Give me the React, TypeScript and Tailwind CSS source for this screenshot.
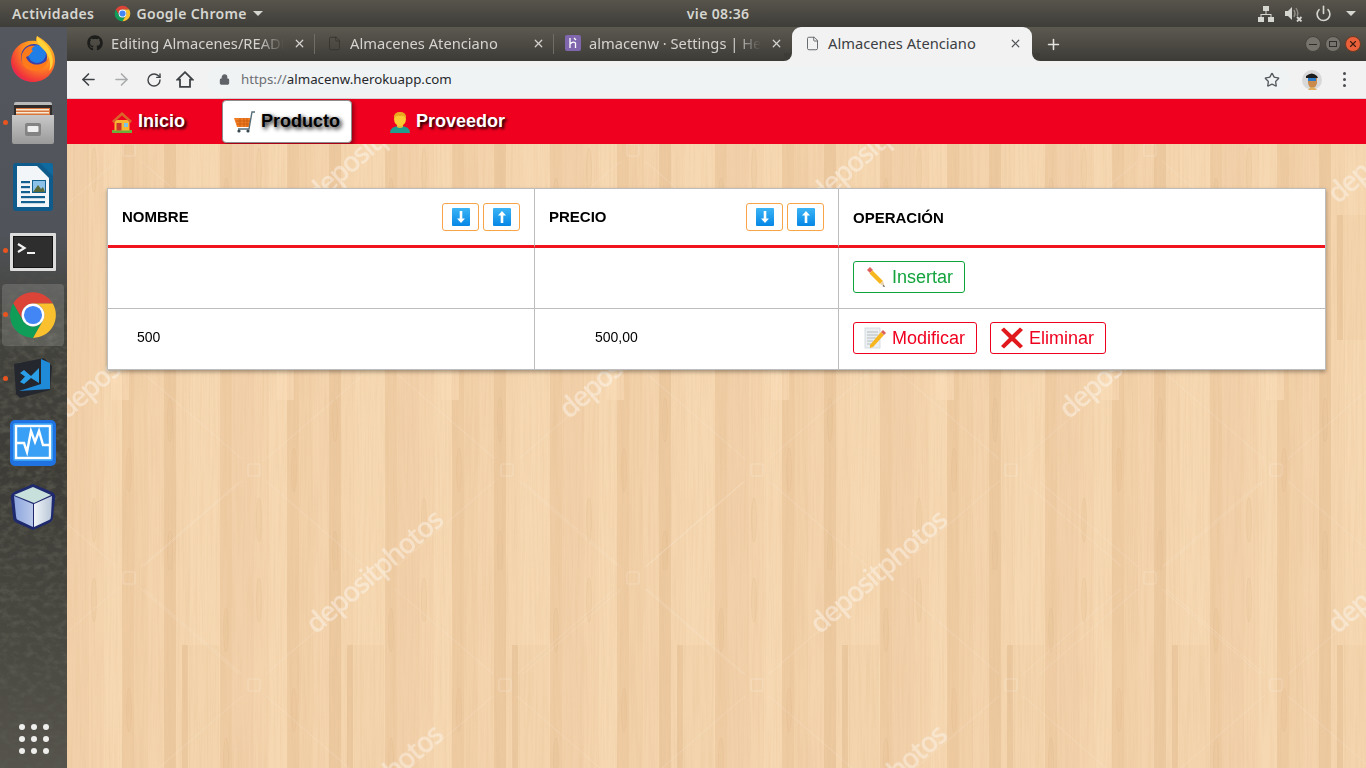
import React from "react";
import { FaGithub } from "react-icons/fa";
import { ArrowLeft, ArrowRight, RotateCw, Star, Lock, X, Plus, Power, File } from "lucide-react";

const sans = "font-['Liberation_Sans',Arial,sans-serif]";
const ui = "font-['Noto_Sans','Open_Sans',sans-serif]";

function ChromeLogo({ size }: { size: number }) {
  return (
    <svg width={size} height={size} viewBox="0 0 48 48">
      <path d="M43 13H24A11 11 0 0 0 14.5 29.5L5 13A22 22 0 0 1 43 13Z" fill="#db4437" />
      <path d="M5 13L14.5 29.5A11 11 0 0 0 33.5 29.5L24 46A22 22 0 0 1 5 13Z" fill="#0f9d58" />
      <path d="M24 46L33.5 29.5A11 11 0 0 0 24 13H43A22 22 0 0 1 24 46Z" fill="#fbc02d" />
      <circle cx="24" cy="24" r="11" fill="#fff" />
      <circle cx="24" cy="24" r="8.7" fill="#4285f4" />
    </svg>
  );
}

function Firefox() {
  return (
    <svg width="46" height="48" viewBox="0 0 46 48">
      <defs>
        <radialGradient id="ffo" cx="0.7" cy="0.25" r="0.95">
          <stop offset="0" stopColor="#ffcb2e" />
          <stop offset="0.45" stopColor="#ff8a1f" />
          <stop offset="0.8" stopColor="#f0323c" />
          <stop offset="1" stopColor="#d6178a" />
        </radialGradient>
      </defs>
      <path d="M27 1C24 8 30 10 26 6C14 4 2 12 1 26C1 38 11 47 23 47C35 47 45 38 45 25C45 14 36 6 27 1Z" fill="url(#ffo)" />
      <circle cx="24" cy="22" r="13" fill="#3c3fa8" />
      <circle cx="27" cy="19" r="9" fill="#1f7fe6" />
      <path d="M12 19C15 12 20 10 25 11C21 13 21 15 23 16C20 18 20 21 16 22C18 28 25 32 33 28C37 26 38 24 39 22C38 32 29 38 20 35C13 33 10 26 12 19Z" fill="#ff7a1a" />
      <path d="M27 1C32 6 40 12 42 21C44 28 42 33 39 36C42 28 39 20 34 15C30 11 26 8 27 1Z" fill="#ffd23a" />
    </svg>
  );
}

function Cabinet() {
  return (
    <svg width="44" height="44" viewBox="0 0 44 44">
      <defs>
        <linearGradient id="cabFront" x1="0" y1="0" x2="0" y2="1">
          <stop offset="0" stopColor="#c8c8c8" />
          <stop offset="1" stopColor="#9a9a9a" />
        </linearGradient>
      </defs>
      <path d="M3 3Q3 1 5 1H39Q41 1 41 3V10H3Z" fill="#b9b9b9" />
      <rect x="3" y="4" width="38" height="10" fill="#2e2b28" />
      <rect x="5" y="7" width="34" height="8" fill="#d9743a" />
      <rect x="5" y="8" width="33" height="1.5" fill="#f8e9d2" />
      <rect x="5" y="11" width="33" height="1.5" fill="#f8e9d2" />
      <path d="M1 14H43V41Q43 43 41 43H3Q1 43 1 41Z" fill="url(#cabFront)" />
      <rect x="14" y="22" width="16" height="13" rx="2" fill="#838383" />
      <rect x="16.5" y="25" width="11" height="6" rx="1" fill="#efefef" />
    </svg>
  );
}

function Writer() {
  return (
    <svg width="40" height="48" viewBox="0 0 40 48">
      <rect x="0" y="0" width="40" height="48" rx="3" fill="#0f5c8c" />
      <path d="M4 3H24L36 15V44H4Z" fill="#f3f6f8" />
      <path d="M27 0H37A3 3 0 0 1 40 3V13Z" fill="#0f6aa0" />
      <rect x="8" y="18" width="9" height="2.2" fill="#14608f" />
      <rect x="8" y="23" width="9" height="2.2" fill="#14608f" />
      <rect x="8" y="28" width="9" height="2.2" fill="#14608f" />
      <rect x="8" y="33" width="24" height="2.2" fill="#14608f" />
      <rect x="8" y="38" width="24" height="2.2" fill="#14608f" />
      <rect x="19" y="17" width="14" height="13" fill="#14608f" />
      <rect x="20" y="18" width="12" height="11" fill="#8cc2e8" />
      <path d="M20 29L25 22L28 26L30 24L32 29Z" fill="#5a6a3a" />
    </svg>
  );
}

function Terminal() {
  return (
    <svg width="46" height="38" viewBox="0 0 46 38" className="mt-[2px]">
      <rect x="0" y="0" width="46" height="38" rx="1" fill="#dcdcdc" />
      <rect x="3" y="3" width="40" height="32" fill="#141414" />
      <rect x="4" y="4" width="38" height="30" fill="#2e2e2e" />
      <path d="M8 11L14.5 15L8 19" fill="none" stroke="#f2f2f2" strokeWidth="2.2" />
      <rect x="17" y="19" width="8" height="2" fill="#f2f2f2" />
    </svg>
  );
}

function VSCode() {
  return (
    <svg width="42" height="42" viewBox="0 0 42 42">
      <path d="M2 6L32 0L40 8L38 32L8 40L4 36Z" fill="#25272e" />
      <path d="M29 1L38 5V31L7 33L29 26Z" fill="#1f8ad8" />
      <path d="M8 15L12 12L19 18L27 10V25L19 20L12 26L8 24L13 18.5Z" fill="#2a9fe8" />
    </svg>
  );
}

function Monitor() {
  return (
    <svg width="46" height="46" viewBox="0 0 46 46">
      <rect x="0" y="0" width="46" height="46" rx="5" fill="#1f72e0" />
      <rect x="3" y="3" width="40" height="38" rx="2" fill="#3aa0f5" />
      <rect x="6" y="6" width="34" height="32" fill="none" stroke="#fff" strokeWidth="2.4" />
      <path d="M7 23H14L17 32L21 11L25 22L29 11L33 25H40" fill="none" stroke="#fff" strokeWidth="2.4" />
    </svg>
  );
}

function Cube() {
  return (
    <svg width="46" height="48" viewBox="0 0 46 48">
      <defs>
        <linearGradient id="cubeL" x1="0" y1="0" x2="1" y2="0">
          <stop offset="0" stopColor="#8ea6de" />
          <stop offset="1" stopColor="#b9c8ea" />
        </linearGradient>
        <linearGradient id="cubeR" x1="0" y1="0" x2="1" y2="0">
          <stop offset="0" stopColor="#f0f4f7" />
          <stop offset="1" stopColor="#b8c6d8" />
        </linearGradient>
      </defs>
      <path d="M23 1L42 9Q46 11 45 16L43 34Q43 38 39 40L23 47L7 40Q3 38 3 34L1 16Q0 11 4 9Z" fill="#1f2a6e" />
      <path d="M23 4L41 12L24 20L4 12Z" fill="#c8e0dc" />
      <path d="M4 13L23 21V44L8 37Q6 36 6 33Z" fill="url(#cubeL)" />
      <path d="M42 13L24 21V44L39 37Q41 36 41 33Z" fill="url(#cubeR)" />
    </svg>
  );
}

function DockItem({ children, dot, active }: { children: React.ReactNode; dot?: boolean; active?: boolean }) {
  return (
    <div className="relative flex h-[64px] w-full items-center justify-center pr-[1px]">
      <div className={`flex h-[62px] w-[62px] items-center justify-center rounded-[4px] ${active ? "bg-[#ffffff26]" : ""}`}>{children}</div>
      {dot && <span className="absolute left-[3px] top-[29px] h-[5px] w-[5px] rounded-full bg-[#e9541f]" />}
    </div>
  );
}

function Dock() {
  return (
    <aside className="relative flex w-[67px] shrink-0 flex-col overflow-hidden bg-[linear-gradient(180deg,#54585e_0%,#50545a_28%,#44443f_38%,#3d3c36_60%,#4a4942_85%,#55534c_100%)]">
      <svg className="absolute inset-0 h-full w-full opacity-80" aria-hidden="true">
        <defs>
          <filter id="rock">
            <feTurbulence type="fractalNoise" baseFrequency="0.11 0.16" numOctaves="5" seed="7" />
            <feColorMatrix values="0 0 0 0 0.1  0 0 0 0 0.1  0 0 0 0 0.08  2.6 0 0 0 -1.1" />
          </filter>
          <linearGradient id="rockFade" x1="0" y1="0" x2="0" y2="1">
            <stop offset="0.3" stopColor="#fff" stopOpacity="0" />
            <stop offset="0.42" stopColor="#fff" stopOpacity="1" />
          </linearGradient>
          <mask id="rockMask"><rect width="100%" height="100%" fill="url(#rockFade)" /></mask>
        </defs>
        <rect width="100%" height="100%" filter="url(#rock)" mask="url(#rockMask)" />
      </svg>
      <div className="relative flex h-full flex-col">
        <DockItem><Firefox /></DockItem>
        <DockItem dot><Cabinet /></DockItem>
        <DockItem><Writer /></DockItem>
        <DockItem dot><Terminal /></DockItem>
        <DockItem dot active><ChromeLogo size={50} /></DockItem>
        <DockItem dot><VSCode /></DockItem>
        <DockItem><Monitor /></DockItem>
        <DockItem><Cube /></DockItem>
        <div className="mx-auto mb-[14px] mt-auto grid grid-cols-3 gap-x-[6px] gap-y-[6px]">
          {Array.from({ length: 9 }).map((_, i) => (
            <span key={i} className="h-[6px] w-[6px] rounded-full bg-[#eeeeec]" />
          ))}
        </div>
      </div>
    </aside>
  );
}

function TopBar() {
  return (
    <header className={`${ui} flex h-[27px] shrink-0 items-center bg-[linear-gradient(180deg,#57544c,#3e3d38)] text-[14px] font-semibold tracking-[0.35px] text-[#d6d6d0]`}>
      <span className="ml-[12px]">Actividades</span>
      <span className="ml-[20px] flex items-center">
        <ChromeLogo size={17} />
        <span className="ml-[5px]">Google Chrome</span>
        <span className="ml-[6px] h-0 w-0 border-x-[5px] border-t-[5px] border-x-transparent border-t-[#d6d6d0]" />
      </span>
      <span className="ml-[424px]">vie 08:36</span>
      <span className="ml-auto mr-[10px] flex items-center">
        <svg width="16" height="16" viewBox="0 0 16 16" fill="#d6d6d0">
          <rect x="5" y="0" width="6" height="5" />
          <rect x="0" y="11" width="6" height="5" />
          <rect x="10" y="11" width="6" height="5" />
          <path d="M7.5 5h1v3H13.5v3h-1V9H3.5v2h-1V8h5z" />
        </svg>
        <svg width="18" height="16" viewBox="0 0 18 16" className="ml-[11px]">
          <path d="M0 5H3L7 1V14L3 10H0Z" fill="#d6d6d0" />
          <path d="M9 4Q11 7.5 9 11M11 2Q14 7 12 10" fill="none" stroke="#8f8d86" strokeWidth="1.4" />
          <path d="M12 11L16.5 15.5M16.5 11L12 15.5" stroke="#d6d6d0" strokeWidth="1.8" />
        </svg>
        <Power size={17} strokeWidth={2.3} className="ml-[12px] text-[#d6d6d0]" />
        <span className="ml-[14px] h-0 w-0 border-x-[5px] border-t-[5px] border-x-transparent border-t-[#d6d6d0]" />
      </span>
    </header>
  );
}

function Tab({ icon, title, width, sep, pad }: { icon: React.ReactNode; title: string; width: string; sep?: boolean; pad: string }) {
  return (
    <div className={`relative flex h-[34px] items-center pb-[2px] ${pad} ${width}`}>
      <span className="flex w-[16px] shrink-0 items-center justify-center">{icon}</span>
      <span className="ml-[8px] min-w-0 flex-1 overflow-hidden whitespace-nowrap text-[14.7px] text-[#d4d3cf] [mask-image:linear-gradient(90deg,#000_85%,transparent_100%)]">{title}</span>
      <X size={13} strokeWidth={2.2} className="mx-[9px] shrink-0 text-[#d4d3cf]" />
      {sep && <span className="absolute right-0 top-[7px] h-[20px] w-px bg-[#6f6d66]" />}
    </div>
  );
}

function TabStrip() {
  return (
    <div className={`${ui} flex h-[34px] shrink-0 items-center bg-[linear-gradient(180deg,#5b5950,#3d3b36)] pl-[11px]`}>
      <Tab width="w-[237px]" pad="pl-[9px]" sep title="Editing Almacenes/README.md" icon={<FaGithub size={16} className="text-[#1d1d1b]" />} />
      <Tab width="w-[239px]" pad="pl-[11px]" sep title="Almacenes Atenciano" icon={<File size={15} strokeWidth={1.4} className="text-[#35342f]" />} />
      <Tab width="w-[238px]" pad="pl-[11px]" title="almacenw · Settings | Heroku" icon={
        <svg width="16" height="16" viewBox="0 0 16 16">
          <rect width="16" height="16" rx="2" fill="#7f66ad" />
          <path d="M5 3V13M5 9Q8 6 10.5 8V13M9 3L11 5" stroke="#fff" strokeWidth="1.3" fill="none" />
        </svg>
      } />
      <div className="relative flex h-[34px] w-[240px] items-center rounded-t-[9px] bg-[#f2f2f2] pb-[2px] pl-[12px]">
        <span className="absolute -left-[8px] bottom-0 h-[8px] w-[8px] bg-[#f2f2f2]"><span className="block h-full w-full rounded-br-[8px] bg-[#3e3c37]" /></span>
        <span className="absolute -right-[8px] bottom-0 h-[8px] w-[8px] bg-[#f2f2f2]"><span className="block h-full w-full rounded-bl-[8px] bg-[#3e3c37]" /></span>
        <File size={15} strokeWidth={1.5} className="ml-[1px] text-[#5f6368]" />
        <span className="ml-[8px] flex-1 text-[14.7px] text-[#3c4043]">Almacenes Atenciano</span>
        <X size={13} strokeWidth={2.2} className="mr-[10px] text-[#4f5256]" />
      </div>
      <Plus size={17} strokeWidth={2.2} className="ml-[13px] text-[#e4e3df]" />
      <div className="ml-auto mr-[5px] flex items-center gap-[4px]">
        <span className="flex h-[16px] w-[16px] items-center justify-center rounded-full border border-[#45433e] bg-[#75736c]"><span className="h-px w-[8px] bg-[#2f2e2a]" /></span>
        <span className="flex h-[16px] w-[16px] items-center justify-center rounded-full border border-[#45433e] bg-[#75736c]"><span className="h-[6px] w-[8px] border border-[#2f2e2a]" /></span>
        <span className="flex h-[16px] w-[16px] items-center justify-center rounded-full border border-[#6e3a22] bg-[#e9603a]"><X size={10} strokeWidth={2.6} className="text-[#3a1d10]" /></span>
      </div>
    </div>
  );
}

function Toolbar() {
  return (
    <div className={`${ui} flex h-[38px] shrink-0 items-center border-b border-[#d4d4d4] bg-[#f2f2f2]`}>
      <ArrowLeft size={19} strokeWidth={2} className="ml-[12px] text-[#3f4245]" />
      <ArrowRight size={19} strokeWidth={2} className="ml-[14px] text-[#a8aaac]" />
      <RotateCw size={16} strokeWidth={2.1} className="ml-[15px] text-[#3f4245]" />
      <svg width="18" height="17" viewBox="0 0 18 17" className="ml-[14px]">
        <path d="M9 1.2L16.6 8.6H14V15.8H4V8.6H1.4Z" fill="none" stroke="#3f4245" strokeWidth="1.8" strokeLinejoin="miter" />
      </svg>
      <div className="ml-[13px] flex h-[28px] w-[1083px] items-center rounded-full bg-[#f0f3f4]">
        <Lock size={11} fill="#5f6368" strokeWidth={2.4} className="ml-[12px] text-[#5f6368]" />
        <span className="ml-[11px] text-[13.3px] text-[#6b6e72]">https://<span className="text-[#26282b]">almacenw.herokuapp.com</span></span>
        <Star size={16} strokeWidth={2} className="ml-auto mr-[10px] text-[#55585c]" />
      </div>
      <svg width="20" height="20" viewBox="0 0 20 20" className="ml-[12px]">
        <circle cx="10" cy="10" r="10" fill="#d8d8d8" />
        <path d="M4 6Q10 1 15 6L16 8H4Z" fill="#1c1c1c" />
        <path d="M6 8H15V13Q14 18 10 18Q7 18 6 13Z" fill="#c98a4b" />
        <rect x="6" y="8" width="8" height="3" fill="#2b79c9" />
        <path d="M6 20Q10 14 15 20Z" fill="#e0b060" />
      </svg>
      <span className="ml-[21px] flex flex-col gap-[3px]">
        <span className="h-[3px] w-[3px] rounded-full bg-[#4a4d50]" />
        <span className="h-[3px] w-[3px] rounded-full bg-[#4a4d50]" />
        <span className="h-[3px] w-[3px] rounded-full bg-[#4a4d50]" />
      </span>
    </div>
  );
}

function HouseEmoji() {
  return (
    <svg width="22" height="22" viewBox="0 0 22 22">
      <rect x="1" y="19" width="20" height="3" fill="#6bae3c" />
      <rect x="3.5" y="9" width="15" height="10.5" fill="#f7b733" />
      <path d="M11 1L21 10L19.5 12L11 4.5L2.5 12L1 10Z" fill="#d9652b" />
      <rect x="5.5" y="12" width="5" height="7.5" fill="#c8362c" />
      <rect x="13" y="12" width="4" height="4" fill="#7cc4e8" />
    </svg>
  );
}

function CartEmoji() {
  return (
    <svg width="22" height="22" viewBox="0 0 22 22">
      <path d="M0 7H17L15 16H3Z" fill="#f07c24" />
      <path d="M2 10H16M3 13H15M6 7V16M10 7V16M13 7V16" stroke="#c85a10" strokeWidth="0.8" />
      <path d="M21 1H18L15 18H4" fill="none" stroke="#546e7a" strokeWidth="1.4" />
      <circle cx="5" cy="20" r="1.6" fill="#37474f" />
      <circle cx="14" cy="20" r="1.6" fill="#37474f" />
    </svg>
  );
}

function PersonEmoji() {
  return (
    <svg width="22" height="22" viewBox="0 0 22 22">
      <path d="M1 22Q1 15 11 15Q21 15 21 22Z" fill="#1f9d8f" />
      <path d="M8 13H14V16Q11 18 8 16Z" fill="#e8b838" />
      <ellipse cx="11" cy="8" rx="6" ry="7" fill="#fbc934" />
      <path d="M5 8Q4 1 11 1Q18 1 17 8Q15 4 11 5Q7 4 5 8Z" fill="#e8a820" />
    </svg>
  );
}

function NavItem({ icon, label, active }: { icon: React.ReactNode; label: string; active?: boolean }) {
  return (
    <div
      className={`flex h-[43px] items-center gap-[5px] rounded-[4px] border px-[11px] text-[18px] font-bold ${
        active
          ? "border-[#8d8d8d] bg-white text-black shadow-[2px_2px_4px_#0006] [text-shadow:2px_2px_4px_#000]"
          : "border-transparent text-white [text-shadow:2px_2px_3px_#000]"
      }`}
    >
      {icon}
      <span>{label}</span>
    </div>
  );
}

function Nav() {
  return (
    <nav className={`${sans} flex h-[45px] shrink-0 items-center gap-[25px] bg-[#f0001f] pl-[32px]`}>
      <NavItem icon={<HouseEmoji />} label="Inicio" />
      <NavItem active icon={<CartEmoji />} label="Producto" />
      <NavItem icon={<PersonEmoji />} label="Proveedor" />
    </nav>
  );
}

const stripes: [number, number, string][] = [
  [0, 12, "#edc9a0"],
  [12, 14, "#f4d5ae"],
  [26, 30, "#f6d8b2"],
  [56, 12, "#efcca3"],
  [68, 22, "#f2d0a9"],
  [90, 15, "#f4d4ad"],
  [105, 18, "#f6d8b2"],
  [123, 12, "#efcba2"],
  [135, 14, "#f2d0a8"],
  [149, 16, "#f4d4ad"],
];

const marks: [number, number][] = [
  [316, 635], [820, 635], [1338, 635], [316, 205], [820, 205], [1338, 205],
  [67, 420], [569, 420], [1069, 420], [316, 850], [820, 850],
];

const logos: [number, number][] = [
  [254, 470], [507, 470], [757, 470], [1011, 470], [1276, 470],
  [129, 578], [633, 578], [1150, 578], [129, 150], [633, 150], [1150, 150],
  [254, 685], [505, 685], [757, 685], [1011, 685], [1276, 685],
];

function Wood() {
  return (
    <svg className="absolute inset-0 h-full w-full" aria-hidden="true">
      <defs>
        <pattern id="planks" patternUnits="userSpaceOnUse" x="97" y="-4" width="165" height="430">
          <rect width="165" height="430" fill="#f3d2a9" />
          {stripes.map(([x, w, c]) => (
            <rect key={x} x={x} y="0" width={w} height="430" fill={c} />
          ))}
          <rect x="25" y="75" width="30" height="125" fill="#eecaa1" opacity="0.3" />
          <rect x="112" y="200" width="18" height="60" fill="#fbdfbc" opacity="0.5" />
          <rect x="18" y="75" width="6" height="125" fill="#e2b88c" opacity="0.45" />
          {[[6, 280], [6, 413], [62, 60], [62, 190], [130, 140], [130, 330], [95, 30], [95, 380]].map(([x, y]) => (
            <ellipse key={`${x}-${y}`} cx={x} cy={y} rx="2.5" ry="22" fill="#dcb084" fillOpacity="0.1" stroke="#d8ab7e" strokeOpacity="0.28" strokeWidth="0.7" />
          ))}
        </pattern>
        <filter id="grain" x="0" y="0" width="100%" height="100%">
          <feTurbulence type="fractalNoise" baseFrequency="0.45 0.012" numOctaves="3" seed="4" />
          <feColorMatrix values="0 0 0 0 0.72  0 0 0 0 0.47  0 0 0 0 0.25  1.2 0 0 0 -0.46" />
        </filter>
        <filter id="soft"><feGaussianBlur stdDeviation="0.6" /></filter>
      </defs>
      <rect width="100%" height="100%" fill="url(#planks)" />
      <rect width="100%" height="100%" filter="url(#grain)" opacity="0.35" />
      <g filter="url(#soft)">
        {logos.map(([x, y]) => {
          const cx = x - 67;
          const cy = y - 144;
          return (
            <g key={`${x}-${y}`} stroke="#fff" strokeOpacity="0.16" strokeWidth="1" fill="none">
              <rect x={cx - 6} y={cy - 6} width="12" height="12" rx="2" strokeWidth="1.6" />
              <path d={`M${cx - 12} ${cy + 11}L${cx - 110} ${cy + 96}M${cx + 12} ${cy + 11}L${cx + 110} ${cy + 96}M${cx - 12} ${cy - 11}L${cx - 110} ${cy - 96}M${cx + 12} ${cy - 11}L${cx + 110} ${cy - 96}`} />
            </g>
          );
        })}
        {marks.map(([x, y]) => (
          <text
            key={`${x}-${y}`}
            x={x - 67}
            y={y - 144}
            transform={`rotate(-41 ${x - 67} ${y - 144})`}
            fill="#fff"
            fillOpacity="0.38"
            fontFamily="'Open Sans', sans-serif"
            fontWeight="600"
            fontSize="28"
            textLength="172"
          >
            depositphotos
          </text>
        ))}
      </g>
    </svg>
  );
}

function ArrowEmoji({ up }: { up?: boolean }) {
  return (
    <svg width="18" height="18" viewBox="0 0 18 18">
      <defs>
        <linearGradient id={up ? "au" : "ad"} x1="0" y1="0" x2="0" y2="1">
          <stop offset="0" stopColor="#3cb4f5" />
          <stop offset="1" stopColor="#0587e6" />
        </linearGradient>
      </defs>
      <rect width="18" height="18" rx="1" fill={`url(#${up ? "au" : "ad"})`} />
      {up ? <path d="M9 3L13 7.5H10.3V15H7.7V7.5H5Z" fill="#fff" /> : <path d="M9 15L13 10.5H10.3V3H7.7V10.5H5Z" fill="#fff" />}
    </svg>
  );
}

function SortButtons() {
  return (
    <div className="flex gap-[4px]">
      <button className="flex h-[28px] w-[37px] items-center justify-center rounded-[3px] border border-[#f7a548] bg-white"><ArrowEmoji /></button>
      <button className="flex h-[28px] w-[37px] items-center justify-center rounded-[3px] border border-[#f7a548] bg-white"><ArrowEmoji up /></button>
    </div>
  );
}

function PencilEmoji() {
  return (
    <svg width="22" height="22" viewBox="0 0 22 22">
      <path d="M3 4L6 1L9 4L6 7Z" fill="#e0605c" />
      <path d="M5.5 7.5L8.5 4.5L19 15L16 18Z" fill="#f7b51e" />
      <path d="M16 18L19 15L21 21Z" fill="#e8d2b0" />
      <path d="M19.6 19L21 21L18.6 20.3Z" fill="#444" />
    </svg>
  );
}

function MemoEmoji() {
  return (
    <svg width="22" height="22" viewBox="0 0 22 22">
      <rect x="1" y="1" width="15" height="20" fill="#eceff1" stroke="#cfd8dc" strokeWidth="0.8" />
      <path d="M3 5H14M3 8H14M3 11H12M3 14H9M3 17H9" stroke="#a8b1b5" strokeWidth="0.8" />
      <path d="M6 18L17 5L20 8L9 20L6 21Z" fill="#f7b51e" />
      <path d="M17 5L19 3L22 6L20 8Z" fill="#e0605c" />
    </svg>
  );
}

function CrossEmoji() {
  return (
    <svg width="22" height="22" viewBox="0 0 22 22">
      <path d="M3 0.5L11 8L19 0.5L22 3L14 11L22 19L19 21.5L11 14L3 21.5L0 19L8 11L0 3Z" fill="#e1191d" />
    </svg>
  );
}

function ActionButton({ icon, label, tone }: { icon: React.ReactNode; label: string; tone: "green" | "red" }) {
  const c = tone === "green" ? "border-[#0da43c] text-[#14a33c]" : "border-[#f0001f] text-[#f0001f]";
  return (
    <button className={`flex h-[32px] items-center gap-[6px] rounded-[3px] border bg-white pl-[10px] pr-[11px] text-[18px] ${c}`}>
      {icon}
      <span className="pt-[2px]">{label}</span>
    </button>
  );
}

function DataTable() {
  const cellR = "border-r border-[#bdbdbd]";
  return (
    <table className={`${sans} ml-[40px] mt-[44px] w-[1219px] table-fixed border-separate border-spacing-0 bg-white text-black shadow-[0_2px_4px_#00000055] outline outline-1 -outline-offset-1 outline-[#bdbdbd]`}>
      <colgroup>
        <col className="w-[428px]" />
        <col className="w-[304px]" />
        <col />
      </colgroup>
      <thead>
        <tr className="text-left text-[15px]">
          <th className={`h-[60px] border-b-[3px] border-b-[#f0141e] pl-[15px] pr-[14px] font-bold ${cellR}`}>
            <div className="flex items-center justify-between"><span className="pt-[2px]">NOMBRE</span><SortButtons /></div>
          </th>
          <th className={`h-[60px] border-b-[3px] border-b-[#f0141e] pl-[14px] pr-[14px] font-bold ${cellR}`}>
            <div className="flex items-center justify-between"><span className="pt-[2px]">PRECIO</span><SortButtons /></div>
          </th>
          <th className="h-[60px] border-b-[3px] border-b-[#f0141e] pl-[14px] pt-[3px] font-bold">OPERACIÓN</th>
        </tr>
      </thead>
      <tbody>
        <tr>
          <td className={`h-[61px] border-b border-b-[#bdbdbd] ${cellR}`} />
          <td className={`h-[61px] border-b border-b-[#bdbdbd] ${cellR}`} />
          <td className="h-[61px] border-b border-b-[#bdbdbd] pb-[3px] pl-[14px]"><ActionButton tone="green" icon={<PencilEmoji />} label="Insertar" /></td>
        </tr>
        <tr className="text-[14px]">
          <td className={`h-[61px] pb-[4px] pl-[30px] ${cellR}`}>500</td>
          <td className={`h-[61px] pb-[4px] pl-[60px] ${cellR}`}>500,00</td>
          <td className="h-[61px] pb-[4px] pl-[14px]">
            <div className="flex gap-[13px]">
              <ActionButton tone="red" icon={<MemoEmoji />} label="Modificar" />
              <ActionButton tone="red" icon={<CrossEmoji />} label="Eliminar" />
            </div>
          </td>
        </tr>
      </tbody>
    </table>
  );
}

export default function App() {
  return (
    <div className="flex h-[768px] w-[1366px] flex-col overflow-hidden">
      <TopBar />
      <div className="flex min-h-0 flex-1">
        <Dock />
        <main className="flex min-w-0 flex-1 flex-col">
          <TabStrip />
          <Toolbar />
          <Nav />
          <section className="relative min-h-0 flex-1 overflow-hidden bg-[#f3d2a9]">
            <Wood />
            <div className="relative">
              <DataTable />
            </div>
          </section>
        </main>
      </div>
    </div>
  );
}
